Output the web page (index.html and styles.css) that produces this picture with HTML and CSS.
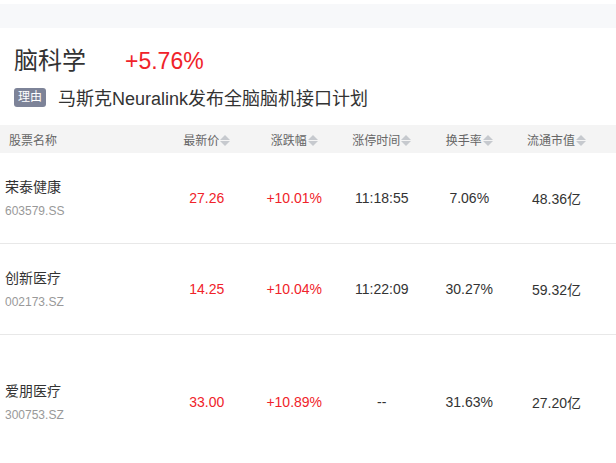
FILE: index.html
```html
<!DOCTYPE html>
<html lang="zh-CN">
<head>
  <meta charset="UTF-8">
  <meta name="viewport" content="width=device-width, initial-scale=1.0">
  <title>脑科学</title>
  <link rel="stylesheet" href="styles.css">
</head>
<body>
  <div class="top-band"></div>

  <div class="plate-head">
    <div class="plate-title">
      <span class="plate-name">脑科学</span>
      <span class="plate-change">+5.76%</span>
    </div>
    <div class="plate-reason">
      <span class="reason-tag">理由</span>
      <span class="reason-text">马斯克Neuralink发布全脑脑机接口计划</span>
    </div>
  </div>

  <table class="stock-table">
    <colgroup>
      <col class="col-name">
      <col class="col-num"><col class="col-num"><col class="col-num"><col class="col-num">
      <col class="col-last">
    </colgroup>
    <thead>
      <tr>
        <th class="th-name">股票名称</th>
        <th>最新价<span class="sort"></span></th>
        <th>涨跌幅<span class="sort"></span></th>
        <th>涨停时间<span class="sort"></span></th>
        <th>换手率<span class="sort"></span></th>
        <th>流通市值<span class="sort"></span></th>
      </tr>
    </thead>
    <tbody>
      <tr>
        <td class="td-name"><div class="stock-name">荣泰健康</div><div class="stock-code">603579.SS</div></td>
        <td class="up">27.26</td>
        <td class="up">+10.01%</td>
        <td>11:18:55</td>
        <td>7.06%</td>
        <td>48.36亿</td>
      </tr>
      <tr>
        <td class="td-name"><div class="stock-name">创新医疗</div><div class="stock-code">002173.SZ</div></td>
        <td class="up">14.25</td>
        <td class="up">+10.04%</td>
        <td>11:22:09</td>
        <td>30.27%</td>
        <td>59.32亿</td>
      </tr>
      <tr class="last-row">
        <td class="td-name"><div class="stock-name">爱朋医疗</div><div class="stock-code">300753.SZ</div></td>
        <td class="up">33.00</td>
        <td class="up">+10.89%</td>
        <td>--</td>
        <td>31.63%</td>
        <td>27.20亿</td>
      </tr>
    </tbody>
  </table>
</body>
</html>
```

FILE: styles.css
```css
body {
  font-family: "Liberation Sans", Arial, "Noto Sans CJK SC", sans-serif;
  background-color: #fff;
  color: #333;
  margin: 0;
  padding-top: 4px;
}
.top-band {
  height: 24px;
  background-color: #f7f8fa;
}
.plate-head {
  padding: 13px 14px 0 14px;
}
.plate-title {
  display: flex;
  align-items: baseline;
  height: 34px;
}
.plate-name {
  font-size: 24px;
  color: #333;
  width: 111px;
}
.plate-change {
  font-size: 23px;
  color: #f0232a;
}
.plate-reason {
  display: flex;
  align-items: center;
  margin-top: 10px;
  height: 24px;
}
.reason-tag {
  background-color: #7d8398;
  color: #fff;
  font-size: 12px;
  line-height: 19px;
  padding: 0 4px;
  border-radius: 3px;
  margin-right: 12px;
}
.reason-text {
  font-size: 18px;
  color: #333;
}
.stock-table {
  width: 616px;
  margin-top: 16px;
  border-collapse: collapse;
  table-layout: fixed;
}
.col-name {
  width: 163px;
}
.col-num {
  width: 87.5px;
}
.col-last {
  width: 103px;
}
.stock-table th {
  background-color: #f4f4f4;
  color: #666;
  font-size: 12px;
  font-weight: normal;
  height: 28px;
  padding: 0;
  text-align: center;
  white-space: nowrap;
}
.stock-table th.th-name {
  text-align: left;
  padding-left: 9px;
}
.stock-table th:last-child, .stock-table td:last-child {
  padding-right: 16px;
}
.sort {
  display: inline-block;
  position: relative;
  width: 10px;
  height: 11px;
  margin-left: 1px;
  vertical-align: -1px;
}
.sort::before, .sort::after {
  content: "";
  position: absolute;
  left: 0;
  border-left: 5px solid transparent;
  border-right: 5px solid transparent;
}
.sort::before {
  top: 0;
  border-bottom: 5px solid #c6c9ce;
}
.sort::after {
  bottom: 0;
  border-top: 5px solid #c6c9ce;
}
.stock-table td {
  height: 90px;
  font-size: 14px;
  color: #333;
  text-align: center;
  padding: 0;
  border-bottom: 1px solid #e8e8e8;
}
.stock-table td.td-name {
  text-align: left;
  padding-left: 5px;
}
.stock-table .last-row td {
  height: 134px;
  border-bottom: none;
}
.stock-table td.up {
  color: #f0232a;
}
.stock-name {
  font-size: 14px;
  color: #333;
  line-height: 20px;
}
.stock-code {
  font-size: 12px;
  color: #999;
  line-height: 16px;
  margin-top: 6px;
}
```
